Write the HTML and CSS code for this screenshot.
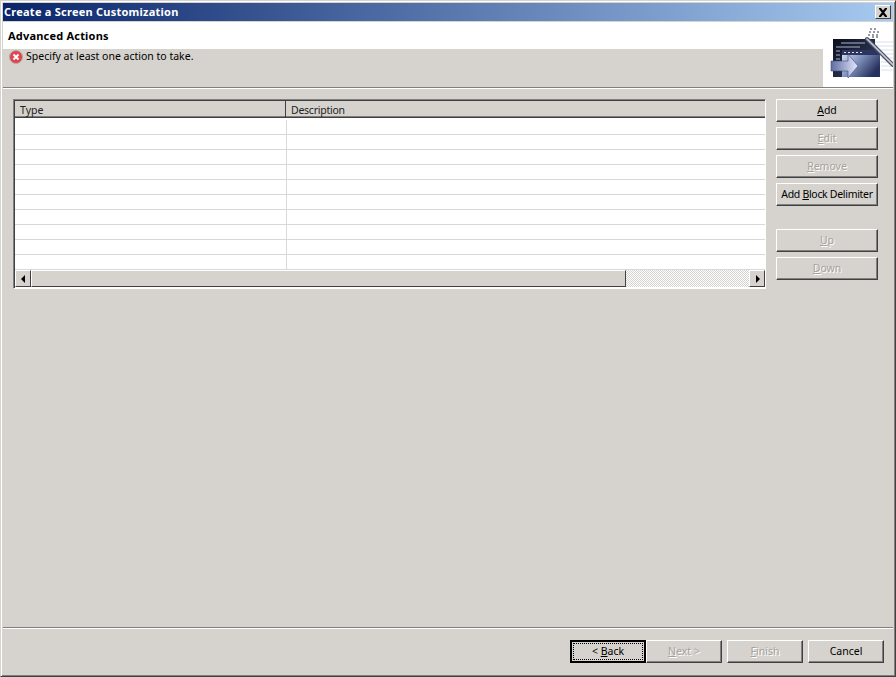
FILE: index.html
```html
<!DOCTYPE html>
<html>
<head>
<meta charset="utf-8">
<title>Create a Screen Customization</title>
<link rel="stylesheet" href="styles.css">
</head>
<body>
<div class="window">
  <div class="titlebar">
    <span class="title">Create a Screen Customization</span>
    <span class="close"><svg width="10" height="9" viewBox="0 0 10 9"><path d="M1 0h2l2 2.500L7 0h2v1L6.200 4.500 9 8v1H7L5 6.500 3 9H1V8l2.800-3.500L1 1z" fill="#000"/></svg></span>
  </div>
  <div class="banner">
    <div class="banner-left">
      <div class="page-title">Advanced Actions</div>
      <div class="message">
        <svg class="err" width="14" height="14" viewBox="0 0 14 14"><circle cx="7" cy="7" r="6.500" fill="#e0454f" stroke="#b8a8a8"/><path d="M4.500 4.500l5 5M9.500 4.500l-5 5" stroke="#fff" stroke-width="2"/></svg>
        <span>Specify at least one action to take.</span>
      </div>
    </div>
    <div class="banner-icon">
      <svg width="70" height="65" viewBox="0 0 70 65">
        <defs>
          <linearGradient id="g1" x1="0" y1="0" x2="1" y2="1"><stop offset="0" stop-color="#0a0e1c"/><stop offset="1" stop-color="#3a4468"/></linearGradient>
          <linearGradient id="g2" x1="0" y1="0" x2="1" y2="0.600"><stop offset="0" stop-color="#dfe6f6"/><stop offset="0.500" stop-color="#7d8fb8"/><stop offset="1" stop-color="#25305c"/></linearGradient>
          <linearGradient id="g3" x1="0" y1="0" x2="1" y2="0"><stop offset="0" stop-color="#5f6ca0"/><stop offset="1" stop-color="#e6e8ff"/></linearGradient>
        </defs>
        <g stroke="#d9dfe8"><path d="M50 20h20M52 24h18M54 28h16M58 32h12M58 36h12M58 40h12M58 44h12M58 48h12"/></g>
        <rect x="10" y="17" width="42" height="38" fill="url(#g1)"/>
        <path d="M18 21h24M13 25h24M13 29h4M13 33h4M13 37h4" stroke="#aab4cc"/>
        <rect x="19" y="28" width="38" height="27" fill="url(#g2)"/>
        <rect x="19" y="28" width="38" height="5" fill="#2c3560"/>
        <path d="M21 30.500h2M25 30.500h2M29 30.500h2M33 30.500h2M37 30.500h2" stroke="#dfe4f2"/>
        <path d="M8 39h17v-7l10 12-10 12v-7H8z" fill="url(#g3)" stroke="#3c4a86" stroke-width=".6"/>
        <path d="M44 17l26 26" stroke="#4c5266" stroke-width="4" stroke-linecap="round"/>
        <path d="M44 17l26 26" stroke="#c7ccd8" stroke-width="1.600" stroke-linecap="round"/>
        <path d="M46 10h2M50 10h2M54 10h2M45 13h2M49 13h2M53 13h2M47 7h2M51 7h2M49 15h2M53 15h2" stroke="#30384f"/>
      </svg>
    </div>
  </div>
  <div class="content">
    <div class="table">
      <div class="thead">
        <div class="th th-type">Type</div>
        <div class="th th-desc">Description</div>
      </div>
      <div class="rows">
        <div class="row"><div class="cell"></div></div>
        <div class="row"><div class="cell"></div></div>
        <div class="row"><div class="cell"></div></div>
        <div class="row"><div class="cell"></div></div>
        <div class="row"><div class="cell"></div></div>
        <div class="row"><div class="cell"></div></div>
        <div class="row"><div class="cell"></div></div>
        <div class="row"><div class="cell"></div></div>
        <div class="row"><div class="cell"></div></div>
        <div class="row"><div class="cell"></div></div>
      </div>
      <div class="hscroll">
        <div class="sb-btn"><svg width="5" height="8" viewBox="0 0 5 8"><path d="M4 0v8L0 4z" fill="#000"/></svg></div>
        <div class="sb-thumb"></div>
        <div class="sb-track"></div>
        <div class="sb-btn"><svg width="5" height="8" viewBox="0 0 5 8"><path d="M1 0v8l4-4z" fill="#000"/></svg></div>
      </div>
    </div>
    <div class="side">
      <div class="btn"><span><u>A</u>dd</span></div>
      <div class="btn off"><span><u>E</u>dit</span></div>
      <div class="btn off"><span><u>R</u>emove</span></div>
      <div class="btn tight"><span>Add <u>B</u>lock Delimiter</span></div>
      <div class="side-gap"></div>
      <div class="btn off"><span><u>U</u>p</span></div>
      <div class="btn off"><span><u>D</u>own</span></div>
    </div>
  </div>
  <div class="footer">
    <div class="btn wide default"><span class="focus"><span>&lt; <u>B</u>ack</span></span></div>
    <div class="btn wide off"><span><u>N</u>ext &gt;</span></div>
    <div class="btn wide off gapl"><span><u>F</u>inish</span></div>
    <div class="btn wide gapl"><span>Cancel</span></div>
  </div>
</div>
</body>
</html>
```

FILE: styles.css
```css
* { box-sizing: border-box; }
html, body { margin: 0; padding: 0; }
body {
  width: 896px;
  height: 677px;
  overflow: hidden;
  background: #d6d3ce;
  font-family: "Noto Sans", sans-serif;
  font-size: 10.5px;
  color: #000;
}
.window {
  width: 896px;
  height: 677px;
  display: flex;
  flex-direction: column;
  background: #d6d3ce;
  border-top: 1px solid #d6d3ce;
  border-left: 1px solid #d6d3ce;
  border-right: 1px solid #404040;
  border-bottom: 1px solid #404040;
  box-shadow: inset 1px 1px 0 #fff, inset -1px -1px 0 #808080;
  padding: 2px;
}
.titlebar {
  height: 18px;
  flex: none;
  display: flex;
  align-items: center;
  justify-content: space-between;
  padding: 0 2px 0 1px;
  background: linear-gradient(to right, #0a246a, #a6caf0);
  margin-bottom: 1px;
}
.title {
  color: #fff;
  font-weight: bold;
  font-size: 11px;
  letter-spacing: 0.24px;
  padding-bottom: 1px;
}
.close {
  width: 16px;
  height: 14px;
  display: flex;
  align-items: center;
  justify-content: center;
  background: #d6d3ce;
  border: 1px solid;
  border-color: #fff #404040 #404040 #fff;
}
.banner {
  height: 65px;
  flex: none;
  display: flex;
  background: #fff;
}
.banner-left {
  flex: 1;
  display: flex;
  flex-direction: column;
}
.page-title {
  height: 27px;
  background: #fff;
  padding: 6px 0 0 5px;
  font-weight: bold;
  font-size: 11px;
  letter-spacing: 0.2px;
}
.message {
  flex: 1;
  background: #d6d3ce;
  display: flex;
  align-items: flex-start;
  gap: 3px;
  padding: 0 0 0 6px;
  line-height: 14px;
}
.err { margin-top: 1px; }
.banner-icon {
  width: 70px;
  flex: none;
  background: #fff;
}
.content {
  flex: 1;
  display: flex;
  border-top: 1px solid #808080;
  box-shadow: inset 0 1px 0 #fff;
  padding: 10px 15px 0 10px;
}
.table {
  width: 753px;
  height: 190px;
  margin-top: 1px;
  background: #fff;
  border: 1px solid;
  border-color: #808080 #fff #fff #808080;
  box-shadow: inset 1px 1px 0 #404040;
  padding: 1px 0 1px 1px;
  display: flex;
  flex-direction: column;
}
.thead {
  height: 17px;
  flex: none;
  display: flex;
  background: #d6d3ce;
  border-bottom: 1px solid #404040;
  box-shadow: inset 0 -1px 0 #808080;
}
.th {
  padding: 1px 0 0 5px;
  height: 16px;
  line-height: 16px;
  color: #222;
}
.th-type {
  width: 271px;
  border-right: 1px solid #404040;
}
.th-desc { flex: 1; letter-spacing: -0.25px; }
.rows { flex: 1; overflow: hidden; padding-top: 2px; }
.row {
  height: 15px;
  border-bottom: 1px solid #d8d8d8;
}
.cell {
  width: 272px;
  height: 100%;
  border-right: 1px solid #d8d8d8;
}
.hscroll {
  height: 17px;
  flex: none;
  display: flex;
}
.sb-btn {
  width: 16px;
  height: 17px;
  flex: none;
  display: flex;
  align-items: center;
  justify-content: center;
  background: #d6d3ce;
  border: 1px solid;
  border-color: #fff #404040 #404040 #fff;
}
.sb-thumb {
  width: 595px;
  background: #d6d3ce;
  border: 1px solid;
  border-color: #fff #404040 #404040 #fff;
}
.sb-track {
  flex: 1;
  background: repeating-conic-gradient(#fff 0 25%, #d6d3ce 0 50%) 0 0 / 2px 2px;
}
.side {
  margin: 1px 0 0 10px;
  width: 102px;
  display: flex;
  flex-direction: column;
  gap: 5px;
}
.btn {
  height: 23px;
  flex: none;
  display: flex;
  align-items: center;
  justify-content: center;
  background: #d6d3ce;
  border: 1px solid;
  border-color: #fff #404040 #404040 #fff;
  box-shadow: inset -1px -1px 0 #808080;
  padding-bottom: 1px;
  white-space: nowrap;
}
.btn.tight { letter-spacing: -0.3px; }
.btn.off { color: #a5a29c; text-shadow: 1px 1px 0 #fff; }
.side-gap { height: 13px; flex: none; }
.footer {
  flex: none;
  height: 47px;
  display: flex;
  align-items: flex-start;
  border-top: 1px solid #808080;
  box-shadow: inset 0 1px 0 #fff;
  padding: 12px 9px 0 0;
  justify-content: flex-end;
}
.btn.wide { width: 76px; }
.gapl { margin-left: 5px; }
.btn.default {
  border: 2px solid #000;
  box-shadow: none;
  padding: 1px;
}
.focus {
  width: 100%;
  height: 100%;
  display: flex;
  align-items: center;
  justify-content: center;
  padding-bottom: 1px;
  border: 1px dotted #000;
}
```
